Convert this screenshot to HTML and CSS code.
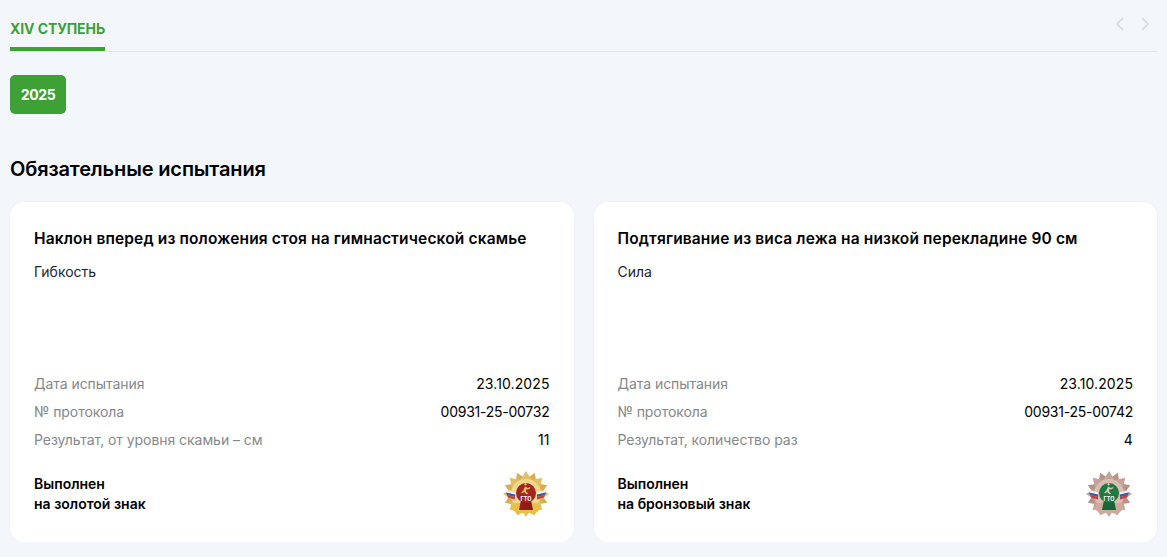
FILE: index.html
```html
<!DOCTYPE html>
<html lang="ru">
<head>
  <meta charset="UTF-8">
  <title>Результаты испытаний</title>
  <link rel="stylesheet" href="styles.css">
</head>
<body>
  <svg class="defs" width="0" height="0">
    <defs>
      <polygon id="star" points="24,1 29.700,10.100 40.300,7.700 37.900,18.300 47,24 37.900,29.700 40.300,40.300 29.700,37.900 24,47 18.300,37.900 7.700,40.300 10.100,29.700 1,24 10.100,18.300 7.700,7.700 18.300,10.100"/>
      <g id="ribbons">
        <path d="M3 20 13 22v2.500L4 22.500z" fill="#eceef4"/>
        <path d="M4 22.500 13 24.500V27L5 25z" fill="#3f58a8"/>
        <path d="M5 25 13 27v2.500L6 27.500z" fill="#d23a3a"/>
        <path d="M45 20 35 22v2.500L44 22.500z" fill="#eceef4"/>
        <path d="M44 22.500 35 24.500V27L43 25z" fill="#3f58a8"/>
        <path d="M43 25 35 27v2.500L42 27.500z" fill="#d23a3a"/>
      </g>
      <path id="runner" d="M23.500 15.500a1.200 1.200 0 1 1 .1 0zM23 16.500l3 1.500 2-1 .5 1-2.500 1.500-1.500-.5-.5 2.500 2 2-1 1-3-2.500-2 1.500-.7-1 2-2z"/>
    </defs>
  </svg>

  <div class="tabs">
    <a class="tab active">XIV СТУПЕНЬ</a>
    <div class="arrows">
      <svg width="10" height="14" viewBox="0 0 10 14"><path d="M8 1 2 7l6 6"/></svg>
      <svg width="10" height="14" viewBox="0 0 10 14"><path d="m2 1 6 6-6 6"/></svg>
    </div>
  </div>

  <button class="year">2025</button>

  <h2 class="section-title">Обязательные испытания</h2>

  <div class="cards">
    <div class="card">
      <h3 class="card-title">Наклон вперед из положения стоя на гимнастической скамье</h3>
      <p class="card-type">Гибкость</p>
      <div class="rows">
        <div class="row"><span>Дата испытания</span><b>23.10.2025</b></div>
        <div class="row"><span>№ протокола</span><b class="number">00931-25-00732</b></div>
        <div class="row"><span>Результат, от уровня скамьи – см</span><b>11</b></div>
      </div>
      <div class="card-foot">
        <div class="status">Выполнен<br>на золотой знак</div>
        <svg class="badge" width="48" height="48" viewBox="0 0 48 48">
          <use href="#star" fill="#d8ae52" transform="rotate(22.5 24 24)"/>
          <use href="#star" fill="#e3c068"/>
          <circle cx="24" cy="24" r="15" fill="#efd98f"/>
          <path d="M13 33h22l4 5-7 7-4-2h-8l-4 2-7-7z" fill="#e9bf45"/>
          <use href="#ribbons"/>
          <path d="M19 30h10l2 10H17z" fill="#8f1d1a"/>
          <circle cx="24" cy="23" r="10" fill="#a6241f"/>
          <use href="#runner" fill="#e5c267"/>
          <text class="badge-label" x="24" y="31">ГТО</text>
        </svg>
      </div>
    </div>

    <div class="card">
      <h3 class="card-title">Подтягивание из виса лежа на низкой перекладине 90 см</h3>
      <p class="card-type">Сила</p>
      <div class="rows">
        <div class="row"><span>Дата испытания</span><b>23.10.2025</b></div>
        <div class="row"><span>№ протокола</span><b class="number">00931-25-00742</b></div>
        <div class="row"><span>Результат, количество раз</span><b>4</b></div>
      </div>
      <div class="card-foot">
        <div class="status">Выполнен<br>на бронзовый знак</div>
        <svg class="badge" width="48" height="48" viewBox="0 0 48 48">
          <use href="#star" fill="#b99287" transform="rotate(22.5 24 24)"/>
          <use href="#star" fill="#c6a398"/>
          <circle cx="24" cy="24" r="15" fill="#d9bdb3"/>
          <path d="M13 33h22l4 5-7 7-4-2h-8l-4 2-7-7z" fill="#cdaa9e"/>
          <use href="#ribbons"/>
          <path d="M19 30h10l2 10H17z" fill="#17663a"/>
          <circle cx="24" cy="23" r="10" fill="#1f7a42"/>
          <use href="#runner" fill="#d9c3b6"/>
          <text class="badge-label" x="24" y="31">ГТО</text>
        </svg>
      </div>
    </div>
  </div>
</body>
</html>
```

FILE: styles.css
```css
* {
  box-sizing: border-box;
}

body {
  margin: 0;
  padding: 0 10px;
  background-color: #f3f7fb;
  font-family: Inter, "Noto Sans", sans-serif;
  color: #000;
}

.defs {
  display: block;
}

/* Tabs */
.tabs {
  display: flex;
  justify-content: space-between;
  height: 52px;
  padding-top: 20px;
  border-bottom: 1px solid #e2e6ea;
}

.tab {
  height: 31px;
  border-bottom: 4px solid #3ea136;
  color: #3ea136;
  font-size: 14px;
  font-weight: 700;
  line-height: 18px;
  letter-spacing: -0.1px;
}

.arrows {
  display: flex;
  gap: 15px;
  padding-right: 7px;
  margin-top: -3px;
}

.arrows svg {
  display: block;
}

.arrows path {
  fill: none;
  stroke: #dbdfe3;
  stroke-width: 2;
}

/* Year button */
.year {
  display: block;
  width: 56px;
  height: 39px;
  margin-top: 23px;
  padding: 0;
  border: none;
  border-radius: 5px;
  background-color: #3ea136;
  color: #fff;
  font-family: inherit;
  font-size: 14px;
  font-weight: 700;
  letter-spacing: -0.4px;
}

.section-title {
  margin: 43px 0 21px;
  font-size: 20px;
  font-weight: 600;
  line-height: 24px;
  letter-spacing: -0.14px;
}

/* Cards */
.cards {
  display: grid;
  grid-template-columns: 1fr 1fr;
  gap: 20px;
}

.card {
  display: flex;
  flex-direction: column;
  height: 340px;
  padding: 27px 24px 0;
  border-radius: 14px;
  background-color: #fff;
  box-shadow: 0 0 3px rgba(120, 140, 170, 0.1);
}

.card-title {
  margin: 0;
  font-size: 15.5px;
  font-weight: 600;
  line-height: 20px;
  letter-spacing: 0.15px;
}

.card-type {
  margin: 14px 0 0;
  font-size: 14px;
  line-height: 18px;
  color: #1e2530;
}

.rows {
  display: flex;
  flex-direction: column;
  gap: 10px;
  margin-top: 94px;
}

.row {
  display: flex;
  justify-content: space-between;
  font-size: 14px;
  line-height: 18px;
}

.row span {
  color: #85888c;
  letter-spacing: -0.05px;
}

.row b {
  font-weight: 400;
  letter-spacing: 0.1px;
}

.row .number {
  letter-spacing: -0.25px;
}

.card-foot {
  display: flex;
  justify-content: space-between;
  align-items: center;
  height: 46px;
  margin-top: 22px;
}

.status {
  font-size: 14px;
  font-weight: 600;
  line-height: 20px;
}

.badge {
  display: block;
  flex: none;
}

.badge-label {
  fill: #fff;
  font-size: 5.500px;
  font-weight: 700;
  text-anchor: middle;
}
```
